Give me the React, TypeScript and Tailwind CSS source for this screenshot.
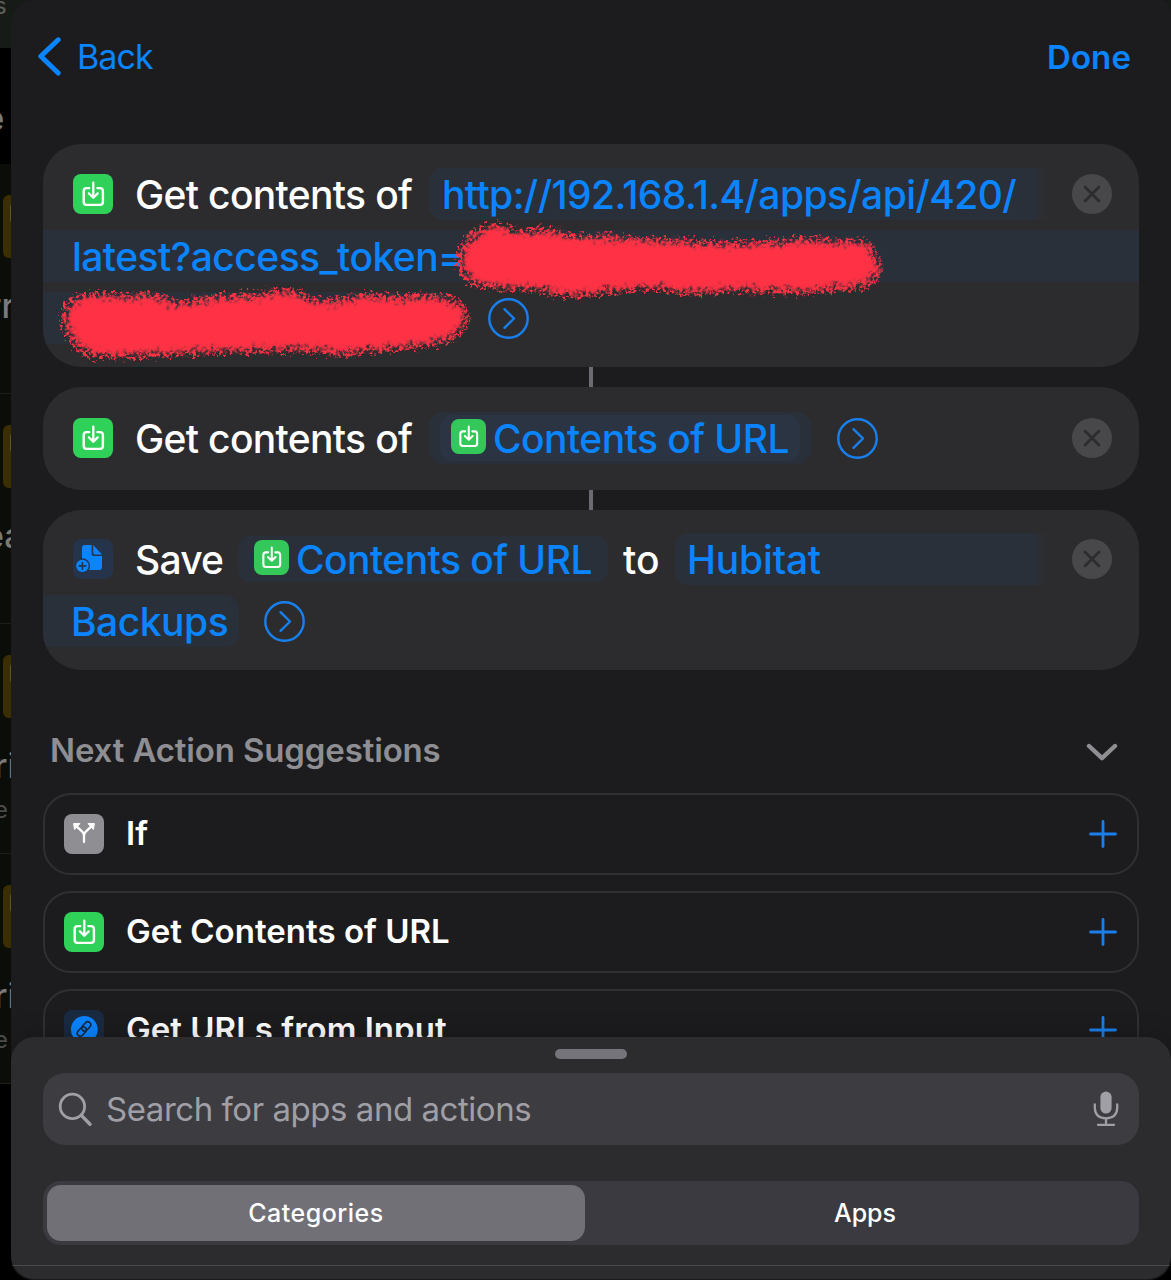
import React from "react";

function DownloadGlyph({ size }: { size: number }) {
  return (
    <svg width={size} height={size} viewBox="0 0 40 40" fill="none" className="shrink-0">
      <path
        d="M16.2 14.1H13.6Q10.7 14.1 10.7 17V28Q10.7 30.9 13.6 30.9H27Q29.9 30.9 29.9 28V17Q29.9 14.1 27 14.1H24.4"
        stroke="white"
        strokeWidth="2.4"
        strokeLinecap="round"
      />
      <path d="M20.3 8.7V23.4M15.9 19.4L20.3 23.7L24.7 19.4" stroke="white" strokeWidth="2.3" strokeLinecap="round" strokeLinejoin="round" />
    </svg>
  );
}

function DownloadTile() {
  return (
    <div className="h-10 w-10 shrink-0 rounded-[8px] bg-[#30d158]">
      <DownloadGlyph size={40} />
    </div>
  );
}

function SmallDownloadTile() {
  return (
    <div className="-mt-[3px] h-[35px] w-[35px] shrink-0 rounded-[8px] bg-[#34c759]">
      <DownloadGlyph size={35} />
    </div>
  );
}

function SaveFileTile() {
  return (
    <div className="h-10 w-10 shrink-0 rounded-[8px] bg-[#25344a]">
      <svg width="40" height="40" viewBox="0 0 40 40" fill="none">
        <path d="M12 6H18.6V14.4Q18.6 17 21.4 17H29V28Q29 31 26 31H12Q9 31 9 28V9Q9 6 12 6Z" fill="#0a84ff" />
        <path d="M20.2 6L29 15.4H21.6Q20.2 15.4 20.2 14Z" fill="#0a84ff" />
        <circle cx="9.4" cy="26.9" r="7.6" fill="#25344a" />
        <circle cx="9.4" cy="26.9" r="6.2" fill="#0a84ff" />
        <path d="M9.4 23.6V30.2M6.1 26.9H12.7" stroke="#25344a" strokeWidth="1.6" strokeLinecap="round" />
      </svg>
    </div>
  );
}

function BranchTile() {
  return (
    <div className="h-10 w-10 shrink-0 rounded-[8px] bg-[#8e8e93]">
      <svg width="40" height="40" viewBox="0 0 40 40" fill="none">
        <path d="M20 28V21.5Q20 19.2 18.2 17.6L12.6 12.4M20 21.5Q20 19.2 21.8 17.6L27.4 12.4" stroke="white" strokeWidth="2.3" strokeLinecap="round" />
        <path d="M9.6 9.6H16L10.6 15.4Z" fill="white" stroke="white" strokeWidth="1" strokeLinejoin="round" />
        <path d="M30.4 9.6H24L29.4 15.4Z" fill="white" stroke="white" strokeWidth="1" strokeLinejoin="round" />
      </svg>
    </div>
  );
}

function LinkTile() {
  return (
    <div className="h-10 w-10 shrink-0 rounded-[8px] bg-[#1a2a40]">
      <svg width="40" height="40" viewBox="0 0 40 40" fill="none">
        <circle cx="20.3" cy="19.4" r="13.4" fill="#0a84ff" />
        <g transform="rotate(-48 20 19)" stroke="#16283f" strokeWidth="1.5">
          <rect x="11.4" y="16" width="10.4" height="6" rx="3" />
          <rect x="18.2" y="16" width="10.4" height="6" rx="3" />
        </g>
      </svg>
    </div>
  );
}

function Disclosure() {
  return (
    <svg width="41" height="41" viewBox="0 0 41 41" fill="none" className="shrink-0">
      <circle cx="20.5" cy="20.5" r="19.2" stroke="#1880ee" strokeWidth="2.4" />
      <path d="M16.5 11.2L26 20.5L16.5 29.8" stroke="#1880ee" strokeWidth="2.4" strokeLinecap="round" strokeLinejoin="round" />
    </svg>
  );
}

function CloseButton() {
  return (
    <svg width="40" height="40" viewBox="0 0 40 40" fill="none" className="ml-auto mr-[27px] shrink-0">
      <circle cx="20" cy="20" r="20" fill="#48484b" />
      <path d="M13 13L27 27M27 13L13 27" stroke="#2c2c2e" strokeWidth="2.8" strokeLinecap="round" />
    </svg>
  );
}

const SCRIBBLES = [
  "M413 120C414 100 424 86 440 81C456 76 470 82 482 86C496 80 512 82 526 88C544 92 560 88 574 90C590 94 620 92 648 94C676 98 700 96 726 95C745 94 760 92 768 91C784 95 806 95 822 94C832 99 836 108 841 123C840 134 830 146 816 147C798 146 776 151 758 152C736 149 712 150 690 149C668 152 640 152 624 149C604 145 586 150 568 150C548 155 520 156 506 152C486 146 462 147 440 145C424 142 416 132 413 120Z",
  "M18 176C19 160 26 150 44 148C64 144 76 152 92 149C112 146 124 150 136 156C160 150 186 148 208 149C230 143 250 142 262 148C274 155 290 156 302 151C322 144 340 152 360 150C380 148 404 148 416 154C424 160 429 168 428 176C424 190 412 200 390 203C368 206 348 208 330 210C310 213 290 214 276 210C252 207 226 210 204 210C178 209 152 213 130 213C106 213 78 217 56 215C34 213 20 196 18 176Z",
];

function Redaction() {
  return (
    <svg className="pointer-events-none absolute left-0 top-0" width="1096" height="223" viewBox="0 0 1096 223">
      <defs>
        <filter id="grain" x="-5%" y="-20%" width="110%" height="140%">
          <feTurbulence type="fractalNoise" baseFrequency="0.3" numOctaves="3" seed="4" result="noise" />
          <feDisplacementMap in="SourceGraphic" in2="noise" scale="14" xChannelSelector="R" yChannelSelector="G" result="rough" />
          <feColorMatrix in="noise" type="matrix" values="0 0 0 0 0  0 0 0 0 0  0 0 0 0 0  5 0 0 0 -2.05" result="mask" />
          <feComposite in="rough" in2="mask" operator="in" />
          <feGaussianBlur stdDeviation="0.6" />
        </filter>
        <filter id="core" x="-5%" y="-20%" width="110%" height="140%">
          <feMorphology in="SourceGraphic" operator="erode" radius="6" result="inner" />
          <feTurbulence type="fractalNoise" baseFrequency="0.22" numOctaves="3" seed="9" result="noise" />
          <feDisplacementMap in="inner" in2="noise" scale="20" xChannelSelector="R" yChannelSelector="G" />
          <feGaussianBlur stdDeviation="1.1" />
        </filter>
      </defs>
      {SCRIBBLES.map((d) => (
        <g key={d} fill="#ff3344">
          <path d={d} filter="url(#grain)" />
          <path d={d} filter="url(#core)" />
        </g>
      ))}
    </svg>
  );
}

function Connector() {
  return <div className="ml-[546px] h-5 w-1 bg-[#6c6b71]" />;
}

function Plus() {
  return (
    <svg width="28" height="28" viewBox="0 0 28 28" className="ml-auto mr-5" stroke="#187fec" strokeWidth="2.8" strokeLinecap="round">
      <path d="M14 1.5V26.5M1.5 14H26.5" />
    </svg>
  );
}

function Suggestion({ icon, label, tracking }: { icon: React.ReactNode; label: string; tracking: string }) {
  return (
    <div className="flex h-[82px] shrink-0 items-center rounded-[28px] border-2 border-[#303032] pl-[19px]">
      {icon}
      <span className={`-mt-[3px] ml-[22px] whitespace-nowrap text-[33px] font-semibold leading-10 text-white ${tracking}`}>{label}</span>
      <Plus />
    </div>
  );
}

function BackgroundRow({ title, shift, sub }: { title: string; shift: string; sub?: string }) {
  return (
    <div className="h-[230px] border-b border-[#1d1e1b] pt-[31px]">
      <div className="ml-[3px] h-[63px] w-4 rounded-[6px] bg-[#3b2f00] pl-[7px] pt-2">
        <div className="h-5 w-2 rounded-sm bg-[#5e5524]" />
      </div>
      <div className={`mt-[28px] whitespace-nowrap text-[34px] font-medium leading-10 text-[#7a7b78] ${shift}`}>{title}</div>
      <div className="-ml-[6px] mt-[8px] whitespace-nowrap text-[24px] leading-8 text-[#4a4b48]">{sub}</div>
    </div>
  );
}

export default function App() {
  return (
    <div className="flex h-[1280px] w-[1171px] overflow-hidden bg-[linear-gradient(#171b17_48px,#000_48px)] font-['Inter',sans-serif]">
      <aside className="flex w-[11px] shrink-0 flex-col overflow-hidden">
        <div className="h-12 shrink-0">
          <div className="-ml-[6px] -mt-2 text-[24px] leading-7 text-[#5b5f5b]">s</div>
        </div>
        <div className="h-[116px] shrink-0">
          <div className="-ml-[17px] mt-[50px] text-[36px] font-semibold leading-[40px] text-[#7a7b78]">e</div>
        </div>
        <div className="h-[920px] shrink-0 overflow-hidden bg-[#0b0d09]">
          <BackgroundRow title="rr" shift="-ml-[12px]" />
          <BackgroundRow title="ea" shift="-ml-[16px]" />
          <BackgroundRow title="ri" shift="-ml-[6px]" sub="e" />
          <BackgroundRow title="ri" shift="-ml-[6px]" sub="e" />
        </div>
      </aside>

      <main className="flex h-[1280px] w-[1160px] flex-col overflow-hidden rounded-b-[22px] rounded-tl-[24px] rounded-tr-[10px] bg-[#1c1c1e]">
        <div className="flex h-[1037px] shrink-0 flex-col overflow-hidden px-8">
          <header className="-mx-8 flex h-[112px] shrink-0 items-center pl-[27px] pr-[40px]">
            <svg width="23" height="39" viewBox="0 0 23 39" fill="none">
              <path d="M20.2 2.8L2.8 19.3L20.2 36" stroke="#0a84ff" strokeWidth="5" strokeLinecap="round" strokeLinejoin="round" />
            </svg>
            <span className="ml-4 pt-px text-[34px] leading-10 tracking-[-0.9px] text-[#0a84ff]">Back</span>
            <span className="ml-auto pt-px text-[33px] font-semibold leading-10 tracking-[0.1px] text-[#0a84ff]">Done</span>
          </header>

          <section className="mt-8 shrink-0 text-[39px] font-medium leading-[50px] text-[#0a84ff]">
            <div className="relative h-[223px] overflow-hidden rounded-[38px] bg-[#2c2c2e] pt-[19px]">
              <div className="flex h-[62px] items-center pl-[30px]">
                <DownloadTile />
                <span className="ml-[22px] w-[294px] shrink-0 whitespace-nowrap pt-px tracking-[-0.67px] text-white">Get contents of</span>
                <div className="h-[52px] w-[621px] shrink-0 whitespace-nowrap rounded-l-[14px] bg-[linear-gradient(90deg,#2a303a_608px,#2c2e33_608px,#2c2c2e)] pl-[13px] pt-[2px] tracking-[-0.6px]">
                  http://192.168.1.4/apps/api/420/
                </div>
                <CloseButton />
              </div>
              <div className="flex h-[62px] items-center">
                <div className="h-[52px] w-full bg-[#2a303a] pl-[29px] pt-[2px] tracking-[-0.55px]">latest?access_token=</div>
              </div>
              <div className="flex h-[62px] items-center">
                <div className="h-[52px] w-[405px] bg-[#2a303a]" />
                <div className="ml-10">
                  <Disclosure />
                </div>
              </div>
              <Redaction />
            </div>

            <Connector />

            <div className="flex h-[103px] items-center rounded-[38px] bg-[#2c2c2e] pb-px pl-[30px]">
              <DownloadTile />
              <span className="ml-[22px] w-[294px] shrink-0 whitespace-nowrap pt-px tracking-[-0.67px] text-white">Get contents of</span>
              <div className="flex h-[52px] w-[382px] shrink-0 items-center rounded-[14px] bg-[#2a303a] px-[11px]">
                <div className="flex h-[46px] w-[360px] items-center rounded-[12px] bg-[#2a3442] pl-[11px]">
                  <SmallDownloadTile />
                  <span className="ml-[7px] whitespace-nowrap pt-px tracking-[-0.55px]">Contents of URL</span>
                </div>
              </div>
              <div className="ml-[26px]">
                <Disclosure />
              </div>
              <CloseButton />
            </div>

            <Connector />

            <div className="h-[160px] overflow-hidden rounded-[38px] bg-[#2c2c2e] pt-[18px]">
              <div className="flex h-[62px] items-center pl-[30px]">
                <SaveFileTile />
                <span className="ml-[22px] w-[103px] shrink-0 whitespace-nowrap pt-px tracking-[-0.8px] text-white">Save</span>
                <div className="flex h-[46px] w-[370px] shrink-0 items-center rounded-[12px] bg-[#2a303a] pl-4">
                  <SmallDownloadTile />
                  <span className="ml-[7px] whitespace-nowrap pt-px tracking-[-0.55px]">Contents of URL</span>
                </div>
                <span className="ml-[15px] w-[52px] shrink-0 pt-px text-white">to</span>
                <div className="h-[52px] w-[375px] shrink-0 rounded-l-[14px] bg-[linear-gradient(90deg,#2a303a_362px,#2c2e33_362px,#2c2c2e)] pl-[12px] pt-[2px] tracking-[-0.2px]">
                  Hubitat
                </div>
                <CloseButton />
              </div>
              <div className="flex h-[62px] items-center">
                <div className="h-[52px] w-[196px] rounded-r-[14px] bg-[#2a303a] pl-[28px] pt-[2px] tracking-[-0.5px]">Backups</div>
                <div className="ml-[25px]">
                  <Disclosure />
                </div>
              </div>
            </div>
          </section>

          <div className="mt-[60px] flex h-10 shrink-0 items-center pl-[7px] pr-[21px]">
            <span className="text-[33px] font-semibold leading-10 tracking-[-0.15px] text-[#8e8e93]">Next Action Suggestions</span>
            <svg width="32" height="18" viewBox="0 0 32 18" fill="none" className="ml-auto mt-[3px]">
              <path d="M3 3L16 15.2L29 3" stroke="#8e8e93" strokeWidth="4.4" strokeLinecap="round" strokeLinejoin="round" />
            </svg>
          </div>

          <section className="mt-[23px] flex flex-col gap-4">
            <Suggestion icon={<BranchTile />} label="If" tracking="tracking-[0.1px]" />
            <Suggestion icon={<DownloadTile />} label="Get Contents of URL" tracking="tracking-[0.02px]" />
            <Suggestion icon={<LinkTile />} label="Get URLs from Input" tracking="tracking-[0.02px]" />
          </section>
        </div>

        <footer className="relative flex h-[242px] shrink-0 flex-col rounded-[24px] bg-[#2c2c2e] px-8 shadow-[0_-2px_24px_rgba(0,0,0,0.22)]">
          <div className="mx-auto mt-3 h-[10px] w-[72px] shrink-0 rounded-full bg-[#75747a]" />
          <div className="mt-[14px] flex h-[72px] shrink-0 items-center rounded-[22px] bg-[#3d3c41] pl-[15px] pr-[20px]">
            <svg width="35" height="35" viewBox="0 0 35 35" fill="none" stroke="#a09fa6" strokeLinecap="round">
              <circle cx="14.4" cy="14.4" r="12.2" strokeWidth="2.8" />
              <path d="M23.6 23.6L32 32.2" strokeWidth="3.4" />
            </svg>
            <span className="ml-[13px] whitespace-nowrap text-[33px] leading-10 tracking-[-0.46px] text-[#a09fa6]">Search for apps and actions</span>
            <svg width="26" height="36" viewBox="0 0 26 36" fill="none" stroke="#a09fa6" strokeWidth="2.3" strokeLinecap="round" className="ml-auto">
              <rect x="7.4" y="0.6" width="11.2" height="22" rx="5.6" fill="#a09fa6" stroke="none" />
              <path d="M1.8 13.5V17Q2.2 27 13 27.4Q23.8 27 24.2 17V13.5M13 27.4V33.6M5 33.8H21" />
            </svg>
          </div>
          <div className="mt-9 flex h-16 shrink-0 rounded-[18px] bg-[#3b3a40] p-1 text-[25px] font-medium text-white">
            <div className="flex w-[538px] items-center justify-center rounded-[14px] bg-[#717076] pt-[2px] tracking-[0.5px]">Categories</div>
            <div className="flex flex-1 items-center justify-center pl-[10px] pt-[2px]">Apps</div>
          </div>
          <div className="-mx-8 mt-5 h-px bg-[#4a4a4d]" />
        </footer>
      </main>
    </div>
  );
}
